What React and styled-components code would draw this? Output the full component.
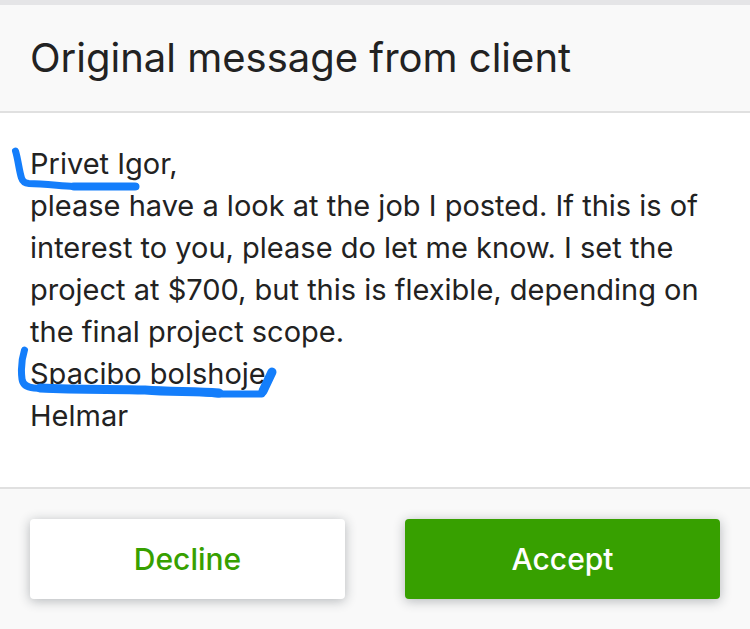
import React from 'react'
import styled, { createGlobalStyle } from 'styled-components'

const styles = {
  green: '#37a000',
  darkCopy: '#222222',
  backgroundLight: '#f9f9f9',
  border: '#e0e0e0',
  marker: '#147efb',
  font: "Inter, 'Open Sans', sans-serif",
}

const App = () => (
  <>
    <GlobalStyle />
    <Dialog>
      <Header>
        <Title>Original message from client</Title>
      </Header>
      <Message>
        <Line>
          Privet Igor,
          <Marker width="140" height="50" viewBox="0 0 140 50" aria-hidden="true">
            <path d="M5.5 8C8 16 9 27 11.5 35Q13 40 19 40.5C34 41 48 42.5 64 43.5H126" strokeWidth="7" />
            <path d="M64 43.5H125" strokeWidth="8" />
          </Marker>
        </Line>
        <Line>
          please have a look at the job I posted. If this is of interest to you,
          please do let me know. I set the project at $700, but this is flexible,
          depending on the final project scope.
        </Line>
        <Line>
          Spacibo bolshoje
          <Marker width="270" height="50" viewBox="0 0 270 50" aria-hidden="true">
            <path d="M14.5 -3C11 8 11 18 12 26Q13 34 24 35C50 37 90 36 136 37C165 39 180 38 208 41H252L262 19" strokeWidth="7" />
            <path d="M30 35C70 37 105 36 135 37C160 39 185 38 209 40" strokeWidth="9" />
            <path d="M253 38L262 19" strokeWidth="9" />
          </Marker>
        </Line>
        <Line>Helmar</Line>
      </Message>
      <Footer>
        <Button type="button">Decline</Button>
        <Button type="button" $primary>Accept</Button>
      </Footer>
    </Dialog>
  </>
)

const GlobalStyle = createGlobalStyle`
  * {
    box-sizing: border-box;
  }
  body {
    margin: 0;
    background-color: ${styles.backgroundLight};
    color: ${styles.darkCopy};
    font-family: ${styles.font};
  }
`

const Dialog = styled.main`
  border-top: 5px solid #e5e5e7;
  background-color: #ffffff;
`

const Header = styled.header`
  padding: 30px;
  background-color: ${styles.backgroundLight};
  border-bottom: 2px solid ${styles.border};
`

const Title = styled.h1`
  margin: 0;
  font-size: 40px;
  font-weight: 400;
  line-height: 46px;
`

const Message = styled.section`
  padding: 30px 30px 50px;
  font-size: 29px;
  line-height: 42px;
`

const Line = styled.p`
  position: relative;
  margin: 0;
`

/* hand drawn stroke lying over the text */
const Marker = styled.svg`
  position: absolute;
  top: 0;
  left: -20px;
  overflow: visible;
  fill: none;
  stroke: ${styles.marker};
  stroke-linecap: round;
  stroke-linejoin: round;
  pointer-events: none;
`

const Footer = styled.footer`
  display: flex;
  gap: 60px;
  padding: 30px;
  background-color: ${styles.backgroundLight};
  border-top: 2px solid ${styles.border};
`

const Button = styled.button`
  flex: 1 1 0;
  height: 80px;
  border: 0;
  border-radius: 4px;
  background-color: ${({ $primary }) => ($primary ? styles.green : '#ffffff')};
  color: ${({ $primary }) => ($primary ? '#ffffff' : styles.green)};
  box-shadow: 0 2px 12px rgba(34, 44, 54, 0.32);
  font-family: inherit;
  font-size: 30px;
  font-weight: 500;
  cursor: pointer;
`

export default App
